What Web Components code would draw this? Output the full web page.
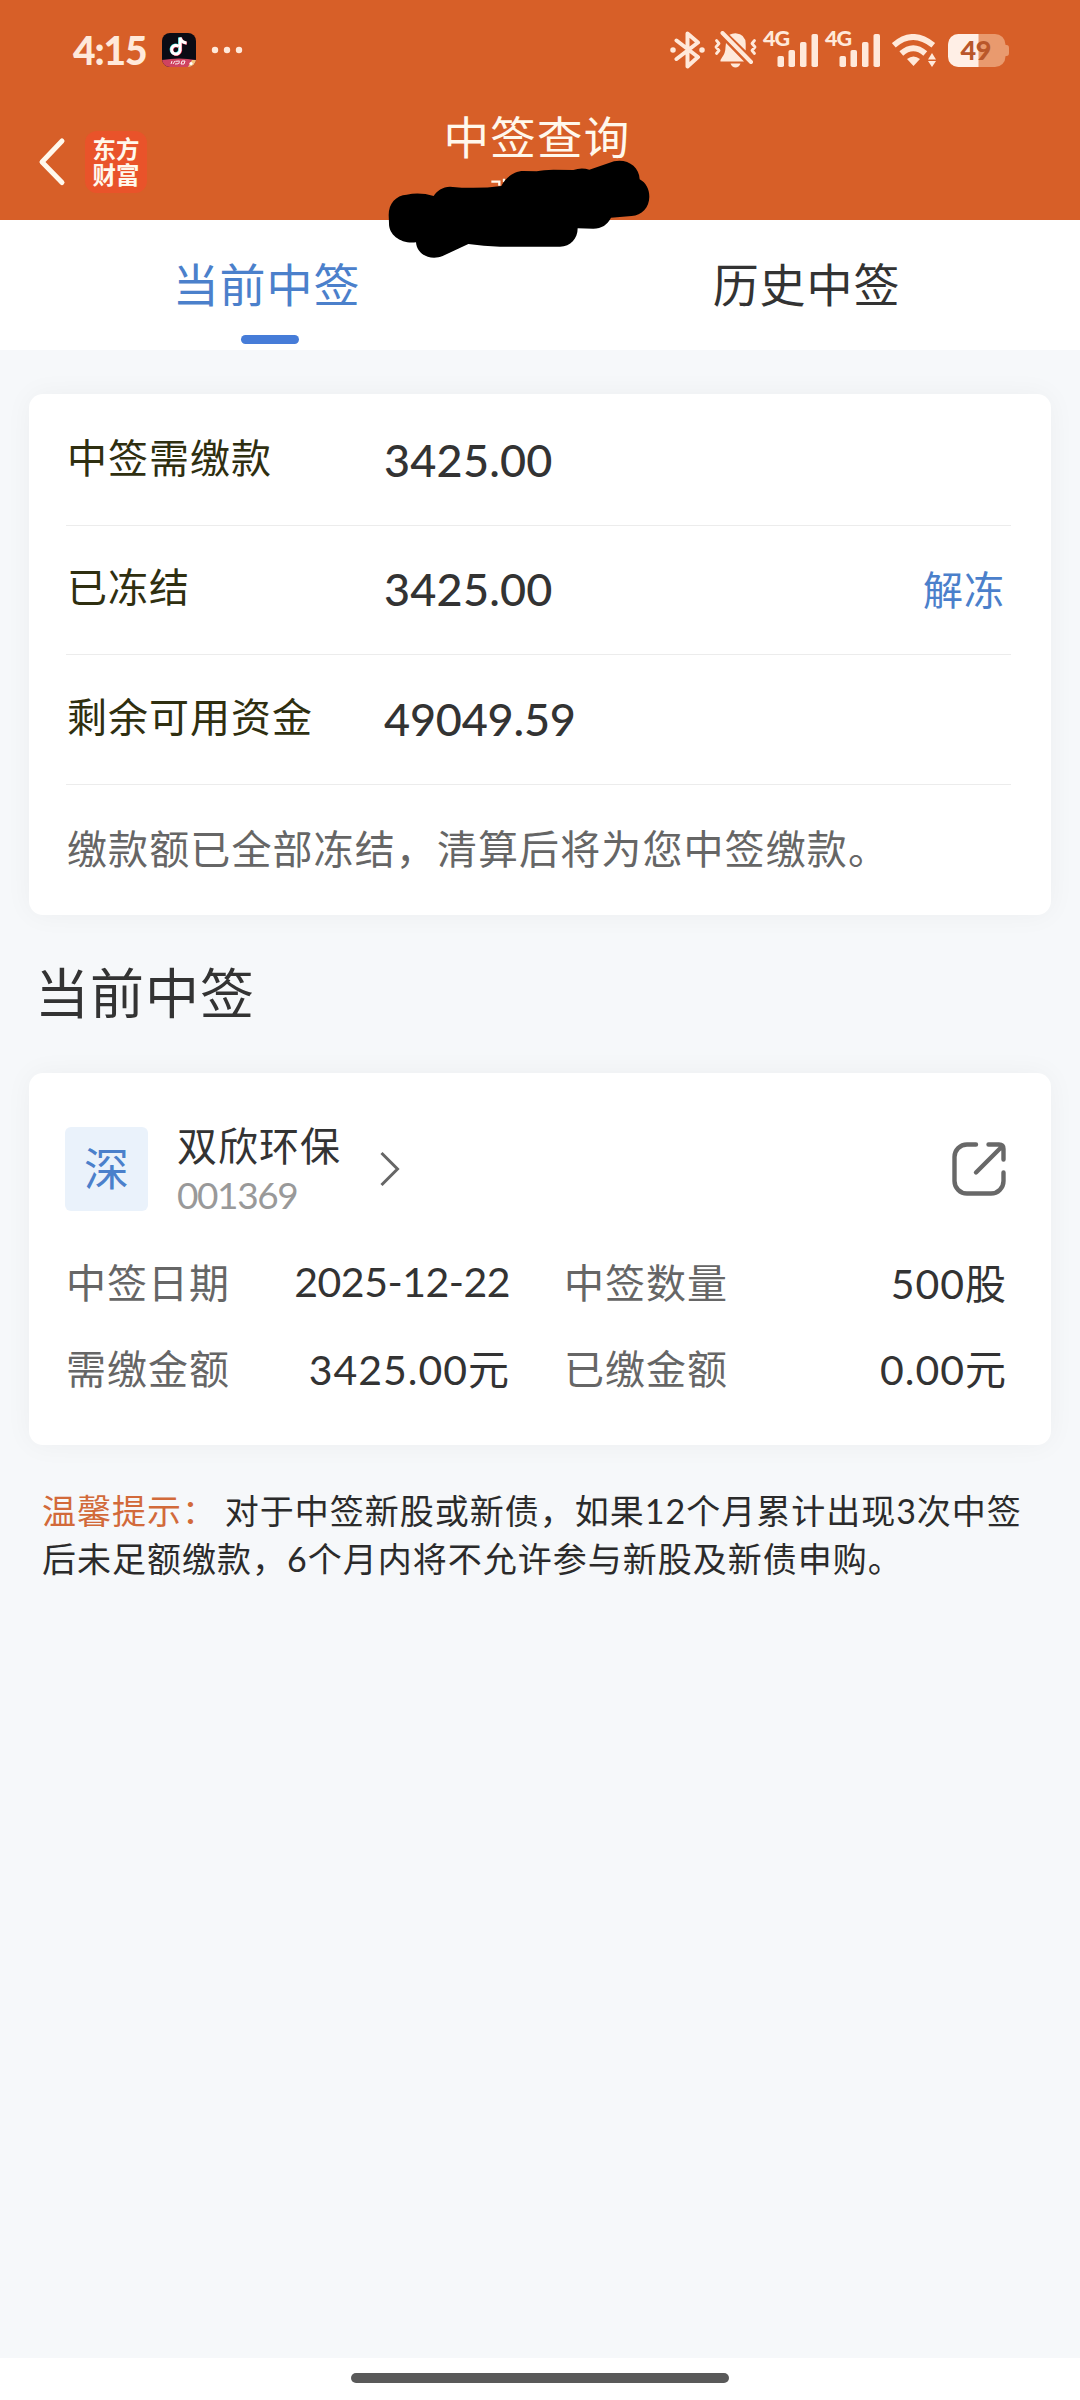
<!DOCTYPE html>
<html lang="zh-CN">
<head>
<meta charset="utf-8">
<meta name="viewport" content="width=device-width">
<title>中签查询</title>
<style>
  html, body { margin: 0; }
  body {
    width: 1080px;
    height: 2400px;
    overflow: hidden;
    background: #f6f8fa;
    color: #333;
    font-family: Lato, "Noto Sans CJK SC", sans-serif;
    font-size: 40px;
  }
</style>
</head>
<body>
<lottery-page></lottery-page>

<script>
const define = (name, html) => {
  const template = document.createElement('template');
  template.innerHTML = html;
  customElements.define(name, class extends HTMLElement {
    constructor() {
      super();
      this.attachShadow({ mode: 'open' }).appendChild(template.content.cloneNode(true));
    }
  });
};

// ---- status bar ----

define('signal-bars', `
  <style>
    :host { display: block; width: 56px; height: 50px; }
    svg { display: block; overflow: visible; }
    text { font: 900 21.500px Lato, sans-serif; letter-spacing: -1px; }
  </style>
  <svg width="56" height="50" viewBox="0 -6 56 50" fill="#ffe9da">
    <text x="0" y="15">4G</text>
    <rect x="14.5" y="25" width="6.5" height="11" rx="1.8"/>
    <rect x="25.5" y="19" width="6.5" height="17" rx="1.8"/>
    <rect x="37" y="11" width="6.5" height="25" rx="1.8"/>
    <rect x="48.5" y="3" width="6.5" height="33" rx="1.8"/>
  </svg>
`);

define('battery-level', `
  <style>
    :host { display: block; width: 61px; height: 33px; }
    svg { display: block; }
    text { font: 900 27px Lato, sans-serif; }
  </style>
  <svg width="61" height="33" viewBox="0 0 61 33">
    <defs><clipPath id="body"><rect width="57.5" height="33" rx="10.5"/></clipPath></defs>
    <g clip-path="url(#body)">
      <rect width="58" height="33" fill="#e99a6e"/>
      <rect width="30.5" height="33" fill="#ffefe6"/>
    </g>
    <path d="M57 11h1.5q2.5 0 2.5 3v5q0 3-2.5 3H57z" fill="#e99a6e"/>
    <text x="12.5" y="26" fill="#b9572a" textLength="31">49</text>
  </svg>
`);

define('status-bar', `
  <style>
    :host { display: flex; align-items: center; height: 100px; padding: 0 71px 0 73px; color: #ffe9da; box-sizing: border-box; }
    .time { font-size: 39px; font-weight: 900; letter-spacing: -1.1px; line-height: 40px; width: 89px; margin-top: -1px; }
    .dots { margin-left: 15px; }
    .right { margin-left: auto; display: flex; align-items: center; }
    svg { display: block; flex: none; }
    .bell { margin-left: 9px; }
    signal-bars { margin-left: 6px; }
    .wifi { margin-left: 11px; }
    battery-level { margin-left: 11px; }
  </style>
  <span class="time">4:15</span>
  <svg width="34" height="34" viewBox="0 0 34 34">
    <defs><clipPath id="app"><rect width="34" height="34" rx="8"/></clipPath></defs>
    <g clip-path="url(#app)">
      <rect width="34" height="34" fill="#0b0b14"/>
      <path d="M0 27q17-3 34 0v7H0z" fill="#cf4360"/>
      <path d="M26 34l4-7h4v7z" fill="#f5c27c"/>
    </g>
    <g fill="none" stroke-width="3">
      <path d="M16 13a4.300 4.300 0 1 0 1.600 4V4.500c.8 3 2.800 5 6.400 5.200" stroke="#25e5e0"/>
      <path d="M17 13.800a4.300 4.300 0 1 0 1.600 4V5c.8 3 2.800 5 6.400 5.300" stroke="#f8385b"/>
      <path d="M16.500 13.400a4.300 4.300 0 1 0 1.600 4V4.700c.8 3 2.800 5 6.400 5.200" stroke="#fff"/>
    </g>
    <path d="M9 31l1-3m1 3l2-3m0 3l3-.2m-2.500-2.500l4-.3m-1 3l1-2.500m1.500 2.500l1-3h3l-1 3z" fill="none" stroke="#fff" stroke-width=".9"/>
    <circle cx="29" cy="30.500" r="1.600" fill="#fff"/>
  </svg>
  <svg class="dots" width="32" height="8" viewBox="0 0 32 8" fill="#ffe9da">
    <circle cx="4" cy="4" r="3.200"/><circle cx="16" cy="4" r="3.200"/><circle cx="28" cy="4" r="3.200"/>
  </svg>

  <div class="right">
    <svg width="35" height="38" viewBox="0 0 35 38" fill="none" stroke="#ffe9da" stroke-width="4" stroke-linejoin="round" stroke-linecap="round">
      <path d="M6.500 9.500l21.500 16.500-10.500 9.500v-33l10.500 9-21.500 16.500"/>
      <path d="M3 19l.01 0M32 19l.01 0" stroke-width="5.500"/>
    </svg>
    <svg class="bell" width="43" height="38" viewBox="0 -1 43 38" fill="#ffe9da">
      <path d="M15.500 2.800Q18 1.200 21.500 1.200Q31.700 2 31.700 12v6.500z"/>
      <path d="M12 11L30 29.500H6.500Q6 28 8 25.500Q11.500 21 11.500 15z"/>
      <path d="M16.500 31.500h10q-1.500 4-5 4t-5-4z"/>
      <g fill="none" stroke="#ffe9da" stroke-linecap="round" stroke-linejoin="round">
        <path d="M8.500 1L37 30" stroke-width="4"/>
        <path d="M2.500 8.500l2.500 3-3 3.500 3 3.500-2.500 3M40.500 8.500l-2.500 3 3 3.500-3 3.500 2.500 3" stroke-width="2.800"/>
      </g>
    </svg>
    <signal-bars></signal-bars>
    <signal-bars></signal-bars>
    <svg class="wifi" width="45" height="33" viewBox="0 0 45 33" fill="none" stroke="#ffe9da" stroke-width="5.800">
      <path d="M1.800 11.200q19-16.500 39.500 0"/>
      <path d="M9.300 19.500q12-10.500 24 0"/>
      <path d="M15 25q6.500-5 13 0l-6.500 7z" fill="#ffe9da" stroke="none"/>
      <path d="M36 25.500l4-6.500 4 6.500zM36 27l4 6 4-6z" fill="#ffe9da" stroke="none"/>
    </svg>
    <battery-level></battery-level>
  </div>
`);

// ---- title bar ----

define('nav-bar', `
  <style>
    :host { display: grid; grid-template-columns: 1fr auto 1fr; height: 120px; color: #fff8ec; }
    .left { display: flex; align-items: center; padding: 4px 0 0 38px; }
    .left svg { display: block; }
    .logo {
      display: grid; place-content: center; width: 62px; height: 62px; margin-left: 18px;
      border-radius: 12px; background: #e9532a; font-weight: 700; font-size: 23.500px; line-height: 26px;
    }
    .title { font-size: 45.500px; line-height: 56px; letter-spacing: 1.300px; padding: 10px 6px 0 0; }
    .scribble { position: absolute; left: 360px; top: 90px; z-index: 2; }
  </style>
  <div class="left">
    <svg width="29" height="50" viewBox="0 0 29 50" fill="none" stroke="#fff8ec" stroke-width="5" stroke-linejoin="round" stroke-linecap="round">
      <path d="M24 4L4 25l20 20.500"/>
    </svg>
    <div class="logo"><span>东方</span><span>财富</span></div>
  </div>
  <div class="title"><slot></slot></div>
  <svg class="scribble" width="360" height="180" viewBox="0 0 1080 540">
    <path d="M394 275h24v12M432 266v10" fill="none" stroke="#fff8ec" stroke-width="7"/>
    <path d="M86 375C86 340 108 316 140 314Q180 306 221 318C230 303 248 290 270 290Q350 298 424 288C435 266 460 243 490 243L530 244Q550 239 580 239L640 240Q664 231 688 239L762 214C800 205 838 228 839 268C858 278 868 298 868 320C868 352 845 376 815 378L753 383C742 404 725 416 700 416L653 415C653 446 632 470 600 470H420Q370 468 325 462L248 498C212 513 170 494 168 457C125 463 86 436 87 400Z"/>
  </svg>
`);

// ---- tabs ----

define('tab-item', `
  <style>
    :host { flex: 1; display: flex; flex-direction: column; align-items: center; color: #333; }
    .label { font-size: 46px; line-height: 60px; letter-spacing: .9px; margin: 35px 7px 0 0; }
    .bar { width: 58px; height: 9px; border-radius: 4.500px; margin-top: 20px; }
    :host([active]) { color: #4b80cb; }
    :host([active]) .bar { background: #467cd8; }
  </style>
  <span class="label"><slot></slot></span>
  <span class="bar"></span>
`);

define('tab-strip', `
  <style>
    :host { display: flex; height: 130px; background: #fff; }
  </style>
  <slot></slot>
`);

// ---- cards ----

define('info-card', `
  <style>
    :host {
      display: block; box-sizing: border-box; margin: 0 29px; background: #fff;
      border-radius: 14px; box-shadow: 0 0 28px rgba(30, 40, 50, .045);
    }
  </style>
  <slot></slot>
`);

define('fund-row', `
  <style>
    :host {
      display: flex; align-items: center; box-sizing: border-box; height: 129.500px;
      margin: 0 40px 0 37px; padding: 0 6px 0 1px; border-bottom: 1.500px solid #ececec;
    }
    .label { width: 317px; color: #2f2f10; letter-spacing: 1px; line-height: 50px; margin-top: -5px; }
    .value { font-size: 45px; line-height: 50px; font-weight: 500; letter-spacing: var(--track, .2px); margin-top: -1px; }
    .action { margin-left: auto; color: #4b80cb; letter-spacing: 1px; margin-top: -4px; }
  </style>
  <span class="label"><slot name="label"></slot></span>
  <span class="value"><slot></slot></span>
  <span class="action"><slot name="action"></slot></span>
`);

define('field-pair', `
  <style>
    :host { display: flex; justify-content: space-between; align-items: center; height: 86px; }
    .label { color: #666; letter-spacing: 1px; padding-left: 1px; }
    .value { color: #333; font-size: 41px; letter-spacing: var(--track, 1px); }
  </style>
  <span class="label"><slot name="label"></slot></span>
  <span class="value"><slot></slot></span>
`);

define('stock-head', `
  <style>
    :host { display: flex; align-items: center; height: 84px; }
    .badge {
      width: 83px; height: 84px; border-radius: 6px; background: #eaf2fb; color: #4b80cb;
      font-size: 45px; line-height: 84px; text-align: center;
    }
    .names { margin-left: 29px; width: 202px; display: flex; flex-direction: column; }
    .name { line-height: 44px; letter-spacing: 1px; margin-top: -2px; }
    .code { font-size: 37px; line-height: 44px; color: #999; letter-spacing: -1.400px; margin: 5px 0 -5px; }
    svg { display: block; }
    .share { margin: 0 1.500px 0 auto; }
  </style>
  <div class="badge"><slot name="market"></slot></div>
  <div class="names">
    <span class="name"><slot></slot></span>
    <span class="code"><slot name="code"></slot></span>
  </div>
  <svg width="24" height="36" viewBox="0 0 24 36" fill="none" stroke="#666" stroke-width="3">
    <path d="M2.500 2L18.500 18l-16 16"/>
  </svg>
  <svg class="share" width="54" height="54" viewBox="0 0 54 54" fill="none" stroke="#686868" stroke-width="4.400" stroke-linecap="round" stroke-linejoin="round">
    <path d="M24 2.500H15A12.500 12.500 0 0 0 2.500 15v24A12.500 12.500 0 0 0 15 51.500h24A12.500 12.500 0 0 0 51.500 39v-8.500"/>
    <path d="M36.500 2.500H47q4.500 0 4.500 4.500v10.500M24 30.500L49.500 5"/>
  </svg>
`);

define('home-indicator', `
  <style>
    :host { display: flex; justify-content: center; height: 42px; margin-top: auto; background: #fff; }
    span { width: 378px; height: 10px; margin-top: 15px; border-radius: 5px; background: #595959; }
  </style>
  <span></span>
`);

// ---- page ----

define('lottery-page', `
  <style>
    :host { display: flex; flex-direction: column; height: 2400px; }
    header { background: #d75f28; height: 220px; }
    .funds { margin-top: 43.500px; height: 521.500px; padding-top: 2.500px; }
    .notice { padding: 0 38px; line-height: 129px; color: #666; letter-spacing: 1.100px; }
    h2 { margin: 47px 0 0 35px; font-size: 54px; line-height: 64px; font-weight: 400; letter-spacing: 1px; }
    .stock { margin-top: 47px; height: 372px; padding: 54px 44px 0 36px; }
    .fields { display: grid; grid-template-columns: 445px 1fr; column-gap: 53px; margin-top: 27px; }
    .date { --track: -.500px; }
    .total { --track: -.200px; }
    .tip { margin: 42px 42px 0; width: 1000px; font-size: 34px; line-height: 48px; letter-spacing: 1px; color: #2b2b2b; }
    .tip b { font-weight: 400; color: #d26a3a; margin-right: -2px; }
  </style>
  <header>
    <status-bar></status-bar>
    <nav-bar>中签查询</nav-bar>
  </header>
  <tab-strip>
    <tab-item active>当前中签</tab-item>
    <tab-item>历史中签</tab-item>
  </tab-strip>

  <info-card class="funds">
    <fund-row><span slot="label">中签需缴款</span>3425.00</fund-row>
    <fund-row><span slot="label">已冻结</span>3425.00<span slot="action">解冻</span></fund-row>
    <fund-row class="total"><span slot="label">剩余可用资金</span>49049.59</fund-row>
    <div class="notice">缴款额已全部冻结，清算后将为您中签缴款。</div>
  </info-card>

  <h2>当前中签</h2>

  <info-card class="stock">
    <stock-head><span slot="market">深</span>双欣环保<span slot="code">001369</span></stock-head>
    <div class="fields">
      <field-pair class="date"><span slot="label">中签日期</span>2025-12-22</field-pair>
      <field-pair><span slot="label">中签数量</span>500股</field-pair>
      <field-pair><span slot="label">需缴金额</span>3425.00元</field-pair>
      <field-pair><span slot="label">已缴金额</span>0.00元</field-pair>
    </div>
  </info-card>

  <div class="tip"><b>温馨提示：</b> 对于中签新股或新债，如果12个月累计出现3次中签<br>后未足额缴款，6个月内将不允许参与新股及新债申购。</div>

  <home-indicator></home-indicator>
</lottery-page>
`);
</script>
</body>
</html>
